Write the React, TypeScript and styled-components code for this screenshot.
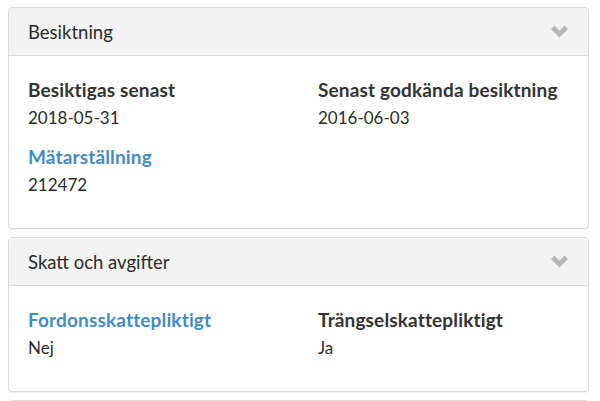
import React from "react";
import styled, { createGlobalStyle } from "styled-components";

const GlobalStyle = createGlobalStyle`
  html, body {
    margin: 0;
    padding: 0;
    background: #ffffff;
  }
  body {
    font-family: Lato, "Open Sans", sans-serif;
    color: #333333;
  }
`;

const Page = styled.div`
  display: flex;
  flex-direction: column;
  gap: 8px;
  padding: 7px 11px 0 8px;
  height: 401px;
  overflow: hidden;
  box-sizing: border-box;
`;

const Panel = styled.section<{ $peek?: boolean }>`
  border: 1px solid #dcdcdc;
  border-radius: 4px;
  background: #fff;
  box-shadow: 0 1px 1px rgba(0, 0, 0, 0.05);
  flex-shrink: 0;
  ${({ $peek }) => ($peek ? "height: 20px;" : "")}
`;

const Heading = styled.header`
  display: flex;
  align-items: center;
  justify-content: space-between;
  height: 47px;
  padding: 0 20px 0 19px;
  background: #f3f3f3;
  border-bottom: 1px solid #dcdcdc;
  border-radius: 4px 4px 0 0;
  font-size: 18.5px;
  color: #2b2b2b;
`;

const Body = styled.div`
  display: grid;
  grid-template-columns: 290px 1fr;
  row-gap: 12px;
  align-content: start;
  padding: 20px 19px 30px;
`;

const Field = styled.div`
  display: flex;
  flex-direction: column;
  gap: 1px;
`;

const Label = styled.div<{ $link?: boolean }>`
  font-weight: 700;
  font-size: 19px;
  letter-spacing: 0.15px;
  line-height: 27px;
  color: ${({ $link }) => ($link ? "#428bca" : "#333")};
`;

const Value = styled.div`
  font-size: 17px;
  line-height: 27px;
  color: #2b2b2b;
`;

const Chevron = () => (
  <svg width="17" height="13" viewBox="0 0 17 13">
    <path d="M0 4 L3.5 0.5 L8.5 5.5 L13.5 0.5 L17 4 L8.5 12.5 Z" fill="#b8b8b8" />
  </svg>
);

type Item = { label: string; value: string; link?: boolean };

function Section({ title, items }: { title: string; items: Item[] }) {
  return (
    <Panel>
      <Heading>
        <span>{title}</span>
        <Chevron />
      </Heading>
      <Body>
        {items.map((it) => (
          <Field key={it.label}>
            <Label $link={it.link}>{it.label}</Label>
            <Value>{it.value}</Value>
          </Field>
        ))}
      </Body>
    </Panel>
  );
}

export default function App() {
  return (
    <>
      <GlobalStyle />
      <Page>
        <Section
          title="Besiktning"
          items={[
            { label: "Besiktigas senast", value: "2018-05-31" },
            { label: "Senast godkända besiktning", value: "2016-06-03" },
            { label: "Mätarställning", value: "212472", link: true },
          ]}
        />
        <Section
          title="Skatt och avgifter"
          items={[
            { label: "Fordonsskattepliktigt", value: "Nej", link: true },
            { label: "Trängselskattepliktigt", value: "Ja" },
          ]}
        />
        <Panel $peek />
      </Page>
    </>
  );
}
